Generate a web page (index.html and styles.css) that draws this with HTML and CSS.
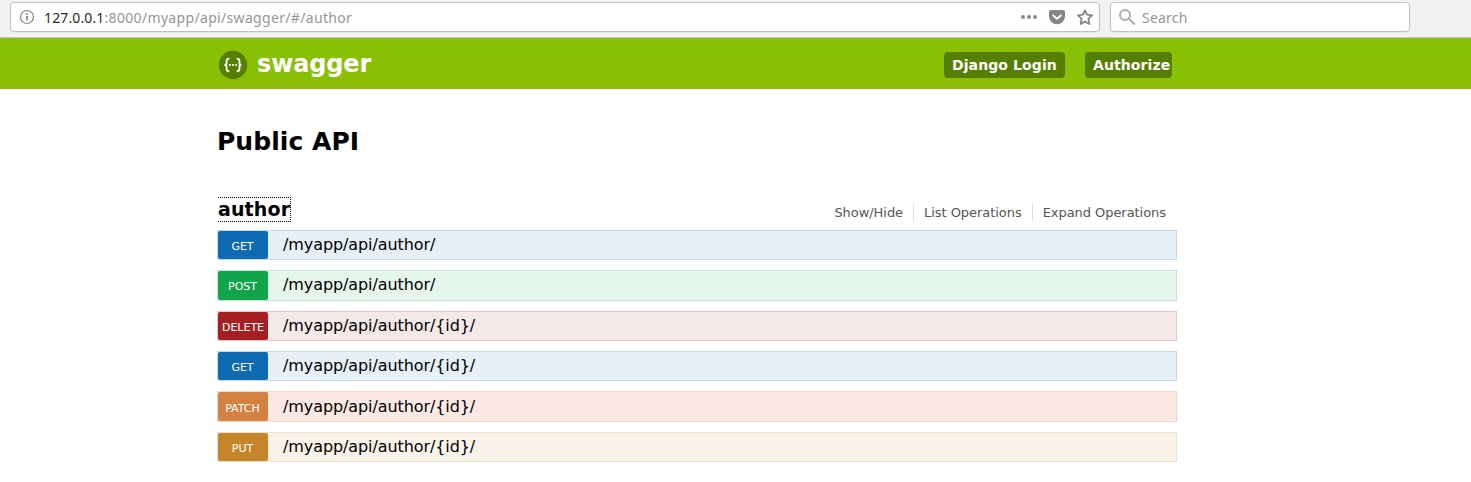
FILE: index.html
```html
<!DOCTYPE html>
<html lang="en">
<head>
<meta charset="utf-8">
<title>Swagger UI</title>
<link rel="stylesheet" href="styles.css">
</head>
<body>
<div class="toolbar">
  <div class="field address">
    <svg class="info" width="16" height="16" viewBox="0 0 16 16" fill="none" stroke="#858585"><circle cx="8" cy="8" r="6.5" stroke-width="1.2"/><path d="M8 7v4.5M8 4.2v1.8" stroke-width="1.7"/></svg>
    <span class="url"><span class="host">127.0.0.1</span>:8000/myapp/api/swagger/#/author</span>
    <span class="actions">
      <svg width="16" height="16" viewBox="0 0 16 16" fill="#858585"><circle cx="2" cy="8" r="1.9"/><circle cx="8" cy="8" r="1.9"/><circle cx="14" cy="8" r="1.9"/></svg>
      <svg width="16" height="16" viewBox="0 0 16 16"><path d="M2 1h12a2 2 0 0 1 2 2v4.5a8 7.8 0 0 1-16 0V3a2 2 0 0 1 2-2z" fill="#858585"/><path d="M4.2 6.4l3.8 3.4 3.8-3.4" fill="none" stroke="#fff" stroke-width="2" stroke-linecap="round" stroke-linejoin="round"/></svg>
      <svg width="16" height="16" viewBox="0 0 16 16"><path d="M8 1.3l2 4.4 5 .7-3.6 3.4.9 5.2L8 12.5 3.7 15l.9-5.2L1 6.4l5-.7z" fill="none" stroke="#858585" stroke-width="1.8" stroke-linejoin="round"/></svg>
    </span>
  </div>
  <div class="field search">
    <svg width="18" height="18" viewBox="0 0 18 18" fill="none" stroke="#adadad"><circle cx="7" cy="7" r="5" stroke-width="2"/><path d="M10.8 10.8l5.4 5" stroke-width="2.2" stroke-linecap="round"/></svg>
    <span class="placeholder">Search</span>
  </div>
</div>
<header class="header">
  <div class="wrap header-row">
    <a class="logo">
      <svg width="30" height="30" viewBox="0 0 30 30"><circle cx="15" cy="15" r="14.2" fill="#547f00"/><path d="M11.4 8.6c-2.3 0-2.8.8-2.8 2.3v2c0 1.3-.5 2-2 2.1 1.5.1 2 .8 2 2.1v2c0 1.5.5 2.3 2.8 2.3M18.6 8.6c2.3 0 2.8.8 2.8 2.3v2c0 1.3.5 2 2 2.1-1.5.1-2 .8-2 2.1v2c0 1.5-.5 2.3-2.8 2.3" fill="none" stroke="#fff" stroke-width="1.9"/><g fill="#fff"><circle cx="11.9" cy="15" r="1.1"/><circle cx="15" cy="15" r="1.1"/><circle cx="18.1" cy="15" r="1.1"/></g></svg>
      <span class="logo-text">swagger</span>
    </a>
    <a class="button login">Django Login</a>
    <a class="button authorize">Authorize</a>
  </div>
</header>
<main class="wrap">
  <h1 class="title">Public API</h1>
  <div class="resource">
    <h2 class="name"><a class="name-link">author</a></h2>
    <ul class="options"><li>Show/Hide</li><li>List Operations</li><li>Expand Operations</li></ul>
  </div>
  <ul class="operations">
    <li class="op get"><span class="method">GET</span><span class="path">/myapp/api/author/</span></li>
    <li class="op post"><span class="method">POST</span><span class="path">/myapp/api/author/</span></li>
    <li class="op delete"><span class="method">DELETE</span><span class="path">/myapp/api/author/{id}/</span></li>
    <li class="op get"><span class="method">GET</span><span class="path">/myapp/api/author/{id}/</span></li>
    <li class="op patch"><span class="method">PATCH</span><span class="path">/myapp/api/author/{id}/</span></li>
    <li class="op put"><span class="method">PUT</span><span class="path">/myapp/api/author/{id}/</span></li>
  </ul>
</main>
</body>
</html>
```
FILE: styles.css
```css
* { box-sizing: border-box; }
body { margin: 0; background: #fff; color: #000; font-family: "DejaVu Sans", sans-serif; overflow: hidden; }
h1, h2, ul { margin: 0; padding: 0; }
ul { list-style: none; }
svg { display: block; flex: none; }

.toolbar { display: flex; gap: 10px; height: 38px; padding: 2px 10px 0; background: #f3f2f1; border-bottom: 1px solid #c6c6c4; }
.field { display: flex; align-items: center; height: 30px; background: #fff; border: 1px solid #c3c2c0; border-radius: 4px; box-shadow: 0 1px 2px rgba(0,0,0,.05); font-family: "Noto Sans", sans-serif; font-size: 14px; color: #969696; }
.address { width: 1090px; padding: 0 6px 0 8px; }
.url { margin-left: 9px; white-space: nowrap; letter-spacing: .33px; }
.host { color: #2b2b2b; letter-spacing: .13px; }
.actions { display: flex; gap: 12px; margin-left: auto; }
.search { width: 300px; padding-left: 7px; }
.placeholder { margin-left: 6px; letter-spacing: .2px; }

.header { height: 51px; background: #89bf04; }
.wrap { width: 960px; margin-left: 217px; }
.header-row { display: flex; align-items: center; height: 51px; padding: 2px 5px 0 1px; }
.logo { display: flex; align-items: center; margin-right: auto; }
.logo-text { margin: -2px 0 0 9px; color: #fff; font-size: 24px; font-weight: 700; line-height: 30px; letter-spacing: -.15px; }
.button { height: 26px; padding-left: 8px; border-radius: 4px; background: #547f00; color: #fff; font-size: 14px; font-weight: 700; line-height: 26px; letter-spacing: .1px; white-space: nowrap; }
.login { width: 121px; }
.authorize { width: 87px; margin-left: 20px; }

.title { padding-top: 38px; font-size: 25px; line-height: 30px; letter-spacing: .05px; }
.resource { display: flex; align-items: flex-start; justify-content: space-between; height: 73px; padding: 40px 11px 0 1px; }
.name { font-size: 19px; line-height: 22px; letter-spacing: .13px; }
.name-link { display: block; height: 25px; border: 1px dotted #000; border-left: 0; }
.options { display: flex; margin-top: 7px; color: #555; font-size: 13px; line-height: 17px; letter-spacing: -.05px; }
.options li { padding: 0 10px; border-right: 1px solid #ddd; }
.options li:last-child { padding-right: 0; border-right: 0; }

.operations { display: flex; flex-direction: column; gap: 10px; margin-top: -.05px; }
.op { display: flex; height: 30.35px; border: 1px solid; }
.method { width: 50px; height: 28.35px; padding-right: 1px; border-radius: 2px; color: #fff; font-size: 11px; line-height: 31.3px; text-align: center; white-space: nowrap; }
.path { margin-left: 15px; font-size: 16px; line-height: 27.34px; letter-spacing: -.09px; }
.get { background: #e7f0f7; border-color: #c3d9ec; }
.get .method { background: #0f6ab4; }
.post { background: #e7f6ec; border-color: #c3e8d1; }
.post .method { background: #10a54a; }
.delete { background: #f5e8e8; border-color: #e8c6c7; }
.delete .method { padding-right: 0; background: #a41e22; }
.patch { background: #fce9e3; border-color: #f5d5c3; }
.patch .method { padding-top: .5px; background: #d38042; }
.patch .path { padding-top: .5px; }
.put { background: #f9f2e9; border-color: #f0e0ca; }
.put .method { background: #c5862b; }
```
